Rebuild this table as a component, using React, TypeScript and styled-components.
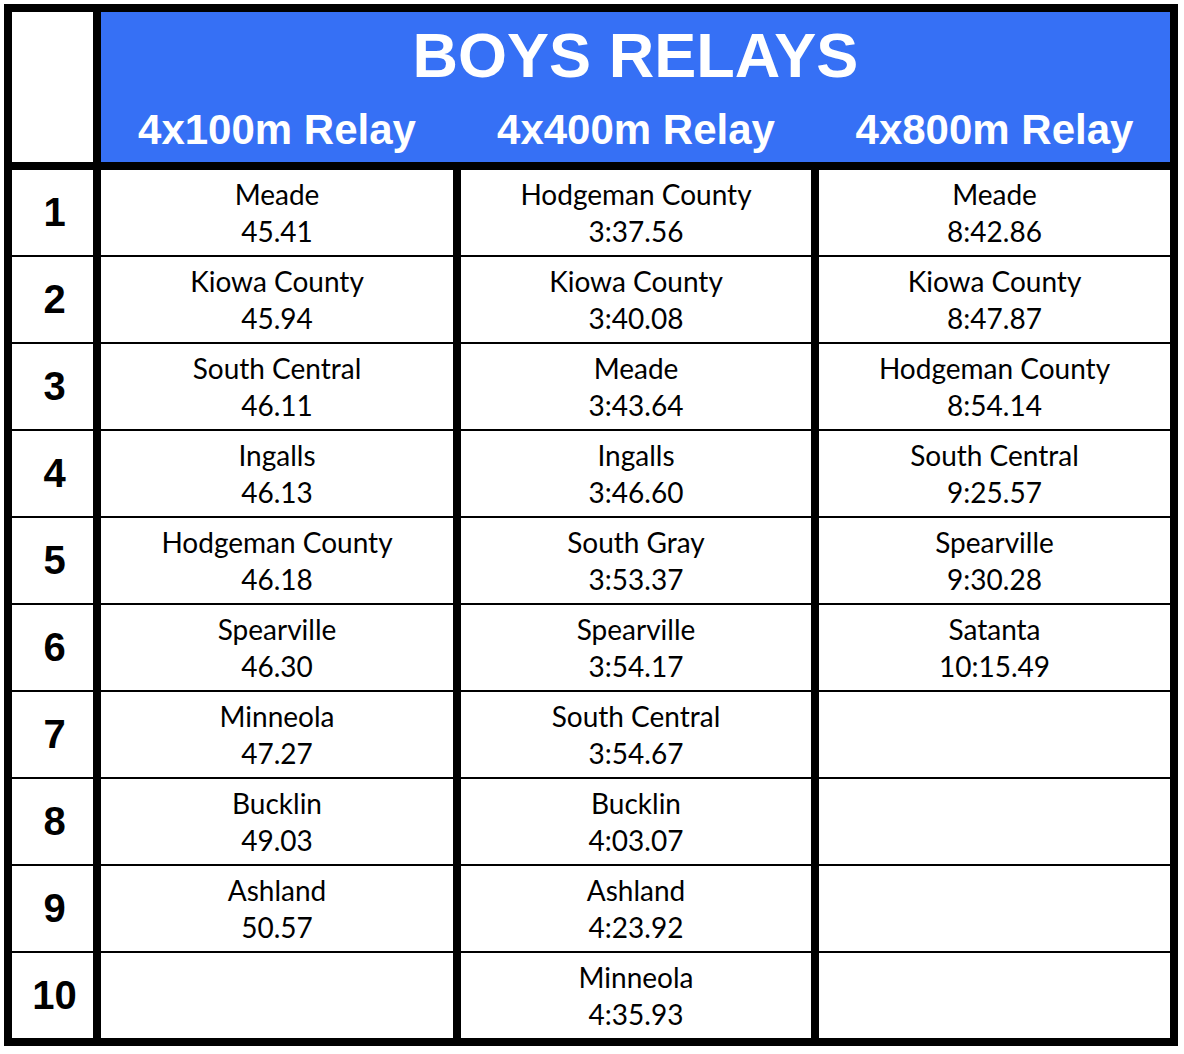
import { Fragment } from "react";
import styled, { createGlobalStyle } from "styled-components";

type Result = { team: string; time: string } | null;

const ranks = [1, 2, 3, 4, 5, 6, 7, 8, 9, 10];

const relays: Result[][] = [
  [
    { team: "Meade", time: "45.41" },
    { team: "Kiowa County", time: "45.94" },
    { team: "South Central", time: "46.11" },
    { team: "Ingalls", time: "46.13" },
    { team: "Hodgeman County", time: "46.18" },
    { team: "Spearville", time: "46.30" },
    { team: "Minneola", time: "47.27" },
    { team: "Bucklin", time: "49.03" },
    { team: "Ashland", time: "50.57" },
    null,
  ],
  [
    { team: "Hodgeman County", time: "3:37.56" },
    { team: "Kiowa County", time: "3:40.08" },
    { team: "Meade", time: "3:43.64" },
    { team: "Ingalls", time: "3:46.60" },
    { team: "South Gray", time: "3:53.37" },
    { team: "Spearville", time: "3:54.17" },
    { team: "South Central", time: "3:54.67" },
    { team: "Bucklin", time: "4:03.07" },
    { team: "Ashland", time: "4:23.92" },
    { team: "Minneola", time: "4:35.93" },
  ],
  [
    { team: "Meade", time: "8:42.86" },
    { team: "Kiowa County", time: "8:47.87" },
    { team: "Hodgeman County", time: "8:54.14" },
    { team: "South Central", time: "9:25.57" },
    { team: "Spearville", time: "9:30.28" },
    { team: "Satanta", time: "10:15.49" },
    null,
    null,
    null,
    null,
  ],
];

const events = ["4x100m Relay", "4x400m Relay", "4x800m Relay"];

const GlobalStyle = createGlobalStyle`
  body {
    margin: 0;
    padding: 4px;
    background: #ffffff;
    font-family: "Liberation Sans", Arial, sans-serif;
  }
`;

const Board = styled.div`
  display: grid;
  grid-template-columns: 81px 352px 350px 351px;
  grid-template-rows: 156px repeat(10, 85px);
  column-gap: 8px;
  row-gap: 2px;
  width: max-content;
  background: #000;
  border: 8px solid #000;
`;

const Corner = styled.div`
  background: #fff;
  margin-bottom: 6px;
`;

const Banner = styled.div`
  grid-column: 2 / 5;
  display: grid;
  grid-template-columns: subgrid;
  grid-template-rows: auto auto;
  background: #3670f5;
  margin-bottom: 6px;
  color: #fff;
  font-weight: 700;
`;

const Title = styled.h1`
  grid-column: 1 / 4;
  margin: 0;
  padding-top: 10px;
  text-align: center;
  font-size: 63px;
  line-height: 66px;
`;

const EventName = styled.h2`
  margin: 0;
  padding-top: 10px;
  text-align: center;
  font-size: 42px;
  line-height: 50px;
`;

const Rank = styled.div`
  display: flex;
  align-items: center;
  justify-content: center;
  background: #fff;
  padding-left: 4px;
  font-size: 40px;
  font-weight: 700;
  color: #000;
`;

const Cell = styled.div`
  display: flex;
  flex-direction: column;
  align-items: center;
  justify-content: center;
  background: #fff;
  font-family: "Lato", "Open Sans", sans-serif;
  font-size: 28px;
  line-height: 37px;
  color: #000;
`;

export default function App() {
  return (
    <>
      <GlobalStyle />
      <Board>
        <Corner />
        <Banner>
          <Title>BOYS RELAYS</Title>
          {events.map((e) => (
            <EventName key={e}>{e}</EventName>
          ))}
        </Banner>
        {ranks.map((r, i) => (
          <Fragment key={r}>
            <Rank>{r}</Rank>
            {relays.map((col, c) => {
              const res = col[i];
              return (
                <Cell key={c}>
                  {res && (
                    <>
                      <span>{res.team}</span>
                      <span>{res.time}</span>
                    </>
                  )}
                </Cell>
              );
            })}
          </Fragment>
        ))}
      </Board>
    </>
  );
}
